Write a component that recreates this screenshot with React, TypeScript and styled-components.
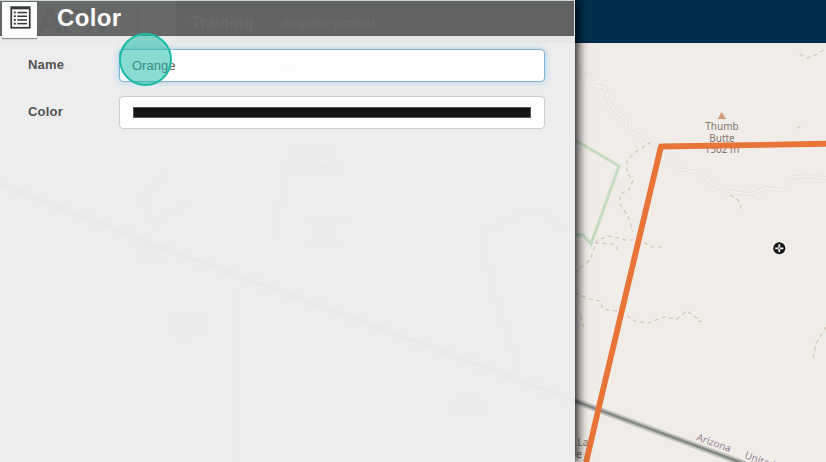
import React from "react";
import styled, { createGlobalStyle } from "styled-components";

const GlobalStyle = createGlobalStyle`
  *, *::before, *::after { box-sizing: border-box; }
  body {
    margin: 0;
    overflow: hidden;
    font-family: "Liberation Sans", Arial, sans-serif;
  }
`;

const Screen = styled.div`
  position: relative;
  display: flex;
  flex-direction: column;
  width: 826px;
  height: 462px;
  overflow: hidden;
  background: #f0ede8;
`;

const SiteBar = styled.header`
  display: flex;
  align-items: center;
  height: 43px;
  flex: none;
  background: #00304d;
  border-bottom: 1px solid #00243c;
  color: #c3ced6;
  font-weight: bold;
`;

const Brand = styled.div`
  width: 176px;
  height: 43px;
  padding-left: 37px;
  display: flex;
  align-items: center;
  background: #98a4aa;
  color: #123;
  font-size: 35px;
  letter-spacing: -1px;
`;

const BrandTail = styled.span`
  color: #5d6d75;
  font-weight: normal;
`;

const SiteLink = styled.span<{ $size: number; $gap: number }>`
  margin-left: ${(p) => p.$gap}px;
  padding-top: 3px;
  font-size: ${(p) => p.$size}px;
`;

const MapCanvas = styled.svg`
  display: block;
  flex: none;
  width: 826px;
  height: 419px;
  font-family: "Noto Sans", "Open Sans", sans-serif;
`;

const Panel = styled.section`
  position: absolute;
  inset: 0 auto 0 0;
  display: flex;
  flex-direction: column;
  width: 575px;
  background: #eee;
  border-top: 1px solid #d5dad9;
  border-right: 1px solid #e6ecee;
  box-shadow: 2px 0 10px 1px rgba(0, 0, 0, 0.95);
  opacity: 0.96;
`;

const PanelHeader = styled.div`
  display: flex;
  align-items: flex-start;
  height: 35px;
  flex: none;
  background: #666;
  border-bottom: 1px solid #5e5e5e;
`;

const ListButton = styled.button`
  display: flex;
  justify-content: center;
  width: 35px;
  height: 36px;
  margin: 1px 0 0 2px;
  padding: 4px 0 0 2px;
  border: 0;
  background: #fff;
  box-shadow: 0 1px 1px rgba(0, 0, 0, 0.4);
`;

const Title = styled.h1`
  margin: 3px 0 0 20px;
  color: #fff;
  font-size: 24px;
  line-height: 28px;
  letter-spacing: 0.35px;
`;

const Form = styled.div`
  display: flex;
  flex-direction: column;
  gap: 14px;
  padding: 13px 29px 0 28px;
`;

const Field = styled.label`
  display: grid;
  grid-template-columns: 91px 1fr;
  color: #4c4c4c;
  font-size: 13px;
  letter-spacing: 0.2px;
`;

const FieldLabel = styled.span`
  padding-top: 8px;
  line-height: 16px;
  font-weight: bold;
`;

const controlBox = `
  width: 100%;
  height: 33px;
  padding: 0 12px;
  border-radius: 4px;
  background: #fff;
`;

const TextInput = styled.input`
  ${controlBox}
  border: 1px solid #7fb1d3;
  box-shadow: 0 0 7px rgba(102, 175, 233, 0.55);
  color: #555;
  font: 13px "Liberation Sans", Arial, sans-serif;
  outline: none;
`;

const ColorControl = styled.div`
  ${controlBox}
  display: flex;
  align-items: center;
  padding: 0 13px;
  border: 1px solid #ccc;
`;

const Swatch = styled.div`
  flex: 1;
  height: 11px;
  border: 1px solid #555;
  background: #0d0d0d;
`;

const ClickMarker = styled.div`
  position: absolute;
  left: 119px;
  top: 33px;
  width: 53px;
  height: 53px;
  border: 2px solid #1cbba6;
  border-radius: 50%;
  background: rgba(28, 187, 166, 0.52);
`;

const ListIcon = () => (
  <svg width="22" height="23" viewBox="0 0 22 23">
    <rect x="1.25" y="1.25" width="18.5" height="20.5" fill="#fff" stroke="#333" strokeWidth="1.7" />
    <path d="M1 2H20" stroke="#333" strokeWidth="2.6" />
    {[6.5, 10.2, 13.9, 17.6].map((y) => (
      <g key={y} fill="#333">
        <rect x="3.8" y={y - 0.9} width="2" height="1.8" />
        <rect x="7.3" y={y - 0.7} width="9.7" height="1.5" />
      </g>
    ))}
  </svg>
);

const roads = [
  "M570 72L590 75L592 85L605 88L609 103L619 114L625 119L628 132L642 136L651 142L662 151",
  "M667 158L677 163L678 169L690 171L698 173L710 182L724 190L738 193L752 194L766 188L783 190L788 187L790 178L806 176L826 178",
];

const trails = [
  "M651 142L634 153L627 161L627 173L633 180L629 190L620 194L620 204L628 216L633 232",
  "M575 273L590 260L597 240L610 236L626 240L640 240L652 247L662 247",
  "M595 243L614 244L618 250",
  "M575 293L590 299L600 301L603 309L616 311L625 314L634 321L648 323L664 317L677 319L687 311L701 321L695 322",
  "M730 195L738 200L741 208",
  "M826 327L816 344L813 359",
  "M800 54L807 58L818 54L826 48",
  "M797 128L803 125",
  "M581 316L584 329",
];

function Terrain() {
  return (
    <MapCanvas viewBox="0 43 826 419">
      <rect y="43" width="826" height="419" fill="#f0ede8" />
      {roads.map((d) => (
        <g key={d} fill="none" strokeLinejoin="round">
          <path d={d} stroke="#e1e0de" strokeWidth="3.6" />
          <path d={d} stroke="#f3f1ee" strokeWidth="2.2" />
        </g>
      ))}
      {trails.map((d) => (
        <path key={d} d={d} fill="none" stroke="#cdb9a7" strokeWidth="1.2" strokeDasharray="4 3.5" opacity=".8" />
      ))}
      <path d="M560 134L575 140L619 166L591 244L583 235L560 233" fill="none" stroke="#c4dcc1" strokeWidth="3" />
      <g fill="none" stroke="#c4c4be" strokeWidth="1.5">
        <path d="M480 238L505 218L535 210L575 235" />
        <path d="M480 238L500 315L520 370" />
        <path d="M239 462V290" strokeDasharray="6 3" />
        <path d="M275 235L286 160M142 195L166 171M142 195L153 225L190 201" />
      </g>
      <path d="M0 184L160 247L290 295L575 401L745 464" fill="none" stroke="#c4c6c2" strokeWidth="6.5" />
      <path d="M0 184L160 247L290 295L575 401L745 464" fill="none" stroke="#858987" strokeWidth="2.8" />
      <g fill="#8a8f88" fontSize="9" textAnchor="middle">
        <g fontSize="13" fontStyle="italic" fill="#5f665d">
          <text x="311" y="153">Pajarita</text>
          <text x="311" y="170">Wilderness</text>
        </g>
        <text x="280" y="73" fontSize="11">Castillo</text>
        <text x="326" y="223">Montana</text>
        <text x="326" y="235">Peak</text>
        <text x="326" y="247">1637 m</text>
        <text x="188" y="322">Cerro La</text>
        <text x="188" y="335">Aguila</text>
        <text x="153" y="250">Mexico</text>
        <text x="153" y="263">Sonora</text>
        <text x="468" y="399">Cerro</text>
        <text x="468" y="412">El Pino</text>
      </g>
      <path d="M721.7 112L726 119H717.5Z" fill="#d39b78" />
      <g fill="#86736a" fontSize="10" textAnchor="middle">
        <text x="722" y="130">Thumb</text>
        <text x="722" y="141.5">Butte</text>
        <text x="722" y="153">1502 m</text>
        <text x="583" y="446">La</text>
        <text x="579" y="458">e</text>
      </g>
      <g fill="#978197" fontSize="10">
        <text transform="translate(696 440) rotate(20)">Arizona</text>
        <text transform="translate(744 458) rotate(20)">United States</text>
      </g>
      <path d="M585 467L598 411L661 146.5L830 143.7" fill="none" stroke="#e87439" strokeWidth="5.8" strokeLinejoin="round" />
      <circle cx="779.3" cy="248.3" r="6" fill="#171717" />
      <path d="M779.3 244.3V252.3M775.3 248.3H783.3" stroke="#fff" strokeWidth="1.7" />
      <circle cx="779.3" cy="248.3" r="1" fill="#555" />
    </MapCanvas>
  );
}

export default function App() {
  return (
    <Screen>
      <GlobalStyle />
      <SiteBar>
        <Brand>APX<BrandTail>GIS</BrandTail></Brand>
        <SiteLink $size={16} $gap={15}>Training</SiteLink>
        <SiteLink $size={12.5} $gap={29}>nogales-project</SiteLink>
      </SiteBar>
      <Terrain />
      <Panel>
        <PanelHeader>
          <ListButton aria-label="List"><ListIcon /></ListButton>
          <Title>Color</Title>
        </PanelHeader>
        <Form>
          <Field>
            <FieldLabel>Name</FieldLabel>
            <TextInput defaultValue="Orange" />
          </Field>
          <Field as="div">
            <FieldLabel>Color</FieldLabel>
            <ColorControl><Swatch /></ColorControl>
          </Field>
        </Form>
      </Panel>
      <ClickMarker />
    </Screen>
  );
}
